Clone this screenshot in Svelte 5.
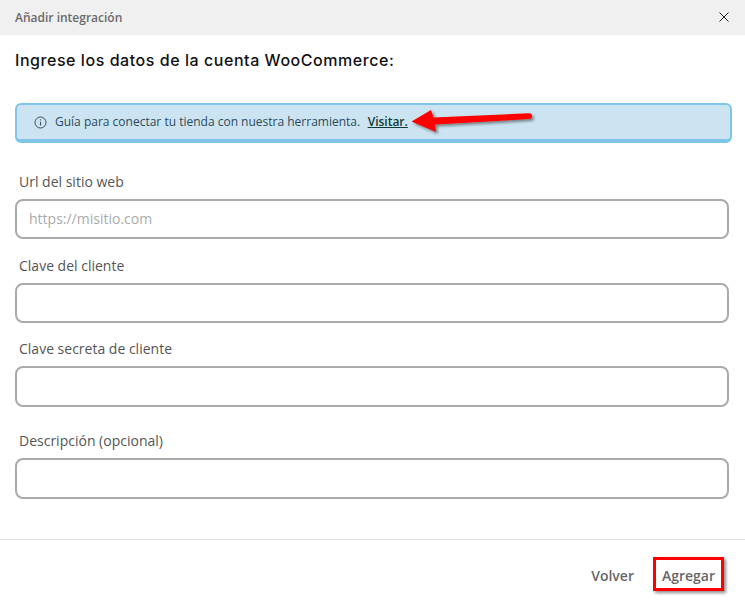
<script>
  const fields = [
    { id: "url", label: "Url del sitio web", placeholder: "https://misitio.com" },
    { id: "key", label: "Clave del cliente", placeholder: "" },
    { id: "secret", label: "Clave secreta de cliente", placeholder: "" },
    { id: "desc", label: "Descripción (opcional)", placeholder: "" }
  ];
</script>

<div class="modal">
  <header class="head">
    <span class="title">Añadir integración</span>
    <button class="close" aria-label="Cerrar">
      <svg width="10" height="10" viewBox="0 0 10 10"><path d="M.5.5l9 9M9.5.5l-9 9" stroke="#222" stroke-width="1" fill="none" /></svg>
    </button>
  </header>

  <main class="body">
    <h2 class="heading">Ingrese los datos de la cuenta WooCommerce:</h2>

    <div class="alert">
      <svg class="info" width="13" height="13" viewBox="0 0 13 13" fill="none">
        <circle cx="6.5" cy="6.5" r="5.5" stroke="#38505f" stroke-width="1" />
        <path d="M6.5 5.8v3.6" stroke="#38505f" stroke-width="1.1" />
        <circle cx="6.5" cy="3.9" r=".7" fill="#38505f" />
      </svg>
      <span class="msg">Guía para conectar tu tienda con nuestra herramienta.</span>
      <a class="visit" href="#visitar">Visitar.</a>

      <svg class="arrow" width="130" height="36" viewBox="0 0 130 36">
        <defs>
          <filter id="sh" x="-10%" y="-30%" width="125%" height="170%">
            <feDropShadow dx="2" dy="2" stdDeviation="1.5" flood-color="#000" flood-opacity=".45" />
          </filter>
        </defs>
        <path filter="url(#sh)" fill="#f00" d="M3.5 20.5 L23 9 L25.5 16.5 L121 12.3 Q124 12.6 124 15 Q124 17.7 121 18 L27 23.5 L28 31 Z" />
      </svg>
    </div>

    <form class="form">
      {#each fields as f}
        <div class="field {f.id}">
          <label for={f.id}>{f.label}</label>
          <input id={f.id} type="text" placeholder={f.placeholder} />
        </div>
      {/each}
    </form>
  </main>

  <footer class="foot">
    <button class="btn">Volver</button>
    <button class="btn add">Agregar</button>
  </footer>
</div>

<style>
  :global(body) { background: #fff; }

  .modal {
    width: 745px; height: 607px;
    display: flex; flex-direction: column;
    font-family: "Open Sans", sans-serif;
    color: #555;
    overflow: hidden;
  }

  .head {
    height: 35px; flex: none;
    display: flex; align-items: center; justify-content: space-between;
    padding: 0 15px;
    background: #f0f0f0;
  }
  .title { font-size: 12px; font-weight: 600; color: #6a6a6a; }
  .close { display: flex; padding: 0; border: 0; background: none; margin-right: 1px; margin-top: -1px; }

  .body { flex: 1; padding: 15px 15px 0; }
  .heading {
    margin: 0;
    font-family: Inter, sans-serif;
    font-size: 16px; font-weight: 500; line-height: 20px;
    letter-spacing: .55px;
    color: #111;
  }

  .alert {
    position: relative;
    box-sizing: border-box;
    width: 717px; height: 40px;
    margin-top: 33px;
    display: flex; align-items: center;
    padding: 0 16.5px 2px;
    background: #cce4f1;
    border: 2px solid #7fc5e8;
    border-bottom-width: 4px;
    border-radius: 6px;
    font-size: 12px;
    color: #2c4a5c;
  }
  .info { flex: none; margin: 2px 8.5px 0 0; }
  .msg { white-space: nowrap; }
  .visit { margin-left: 7.5px; font-weight: 600; color: #0c3b34; text-decoration: underline; }
  .arrow { position: absolute; left: 391px; top: -4px; }

  .form { display: flex; flex-direction: column; margin-top: 29px; width: 714px; }
  .field { display: flex; flex-direction: column; }
  .field label { font-size: 14px; line-height: 20px; padding-left: 4px; margin-bottom: 7px; color: #555; }
  .field input {
    box-sizing: border-box;
    height: 40px; width: 100%;
    padding: 0 12px 1px;
    border: 2px solid #aaa;
    border-radius: 8px;
    background: #fff;
    font: 14px "Open Sans", sans-serif;
    outline: none;
  }
  .field input::placeholder { color: #aaa; opacity: 1; }
  .key { margin-top: 17px; }
  .secret { margin-top: 16px; }
  .secret input, .desc input { height: 41px; }
  .desc { margin-top: 24px; }

  .foot {
    flex: none; height: 67px;
    display: flex; align-items: center; justify-content: flex-end; gap: 28px;
    padding: 2px 30px 0 0;
    margin-bottom: -2px;
    border-top: 1px solid #e2e2e2;
  }
  .btn {
    padding: 0; border: 0; background: none;
    font: 600 14px "Open Sans", sans-serif;
    color: #666;
  }
  .add {
    position: relative;
  }
  .add::after {
    content: "";
    position: absolute; left: -9px; right: -9px; top: -9px; bottom: -6px;
    border: 3.5px solid #f00;
    box-shadow: 2px 2px 3px rgba(0,0,0,.45);
  }
</style>
